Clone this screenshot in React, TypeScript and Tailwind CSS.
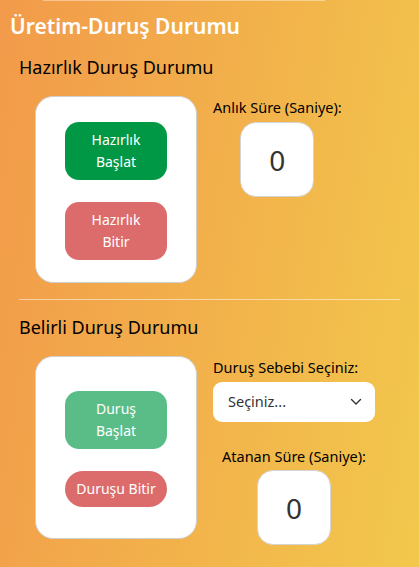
import React from "react";

const font = { fontFamily: '"Noto Sans", "Open Sans", sans-serif' };

function ValueBox({ value }: { value: string }) {
  return (
    <div className="w-[74px] h-[75px] bg-white rounded-[16px] border border-[#d4d4d4] flex items-center justify-center text-[28px] text-[#333333]">
      {value}
    </div>
  );
}

export default function App() {
  return (
    <div
      className="w-[419px] h-[567px] overflow-hidden bg-[linear-gradient(100deg,#f29a4a_0%,#f2c84c_100%)] text-black"
      style={font}
    >
      <div className="ml-[43px] w-[282px] h-px bg-white/40" />
      <div className="pl-[10px] pt-[11px] text-[21px] leading-[28px] font-semibold text-white">
        Üretim-Duruş Durumu
      </div>

      {/* Section 1 */}
      <div className="px-[19px]">
        <div className="mt-[13px] text-[18px] leading-[28px]">Hazırlık Duruş Durumu</div>
        <div className="mt-[15px] flex items-start gap-[16px] pl-[16px]">
          <div className="w-[162px] h-[187px] bg-white rounded-[18px] border border-[#d0d0d0] flex flex-col items-center justify-center gap-[22px] pt-[3px]">
            <button className="w-[102px] h-[58px] rounded-[14px] bg-[#009845] text-white text-[14px] leading-[22px]">
              Hazırlık
              <br />
              Başlat
            </button>
            <button className="w-[102px] h-[58px] rounded-[14px] bg-[#dc6c6c] text-white text-[14px] leading-[22px]">
              Hazırlık
              <br />
              Bitir
            </button>
          </div>
          <div className="flex flex-col items-center">
            <div className="text-[14.5px] leading-[20px] mt-[1px]">Anlık Süre (Saniye):</div>
            <div className="mt-[5px]">
              <ValueBox value="0" />
            </div>
          </div>
        </div>

        <div className="mt-[16px] h-px bg-white/50" />

        {/* Section 2 */}
        <div className="mt-[13px] text-[18px] leading-[28px]">Belirli Duruş Durumu</div>
        <div className="mt-[15px] flex items-start gap-[16px] pl-[16px]">
          <div className="w-[162px] h-[183px] bg-white rounded-[18px] border border-[#d0d0d0] flex flex-col items-center justify-center gap-[22px] pt-[2px]">
            <button className="w-[102px] h-[58px] rounded-[14px] bg-[#5abd87] text-white text-[14px] leading-[22px]">
              Duruş
              <br />
              Başlat
            </button>
            <button className="w-[102px] h-[36px] rounded-[18px] bg-[#dc6c6c] text-white text-[14px] leading-[22px]">
              Duruşu Bitir
            </button>
          </div>
          <div className="w-[162px] flex flex-col items-center">
            <div className="self-start text-[14.5px] leading-[20px] mt-[1px]">Duruş Sebebi Seçiniz:</div>
            <div className="mt-[5px] w-[162px] h-[40px] bg-white rounded-[9px] flex items-center justify-between pl-[15px] pr-[13px]">
              <span className="text-[14.5px] text-[#333333]">Seçiniz...</span>
              <svg width="12" height="8" viewBox="0 0 12 8" fill="none">
                <path d="M1.5 1.5 L6 6 L10.5 1.5" stroke="#333" strokeWidth="1.4" strokeLinecap="round" strokeLinejoin="round" />
              </svg>
            </div>
            <div className="mt-[24px] text-[14.5px] leading-[20px]">Atanan Süre (Saniye):</div>
            <div className="mt-[4px]">
              <ValueBox value="0" />
            </div>
          </div>
        </div>
      </div>
    </div>
  );
}
